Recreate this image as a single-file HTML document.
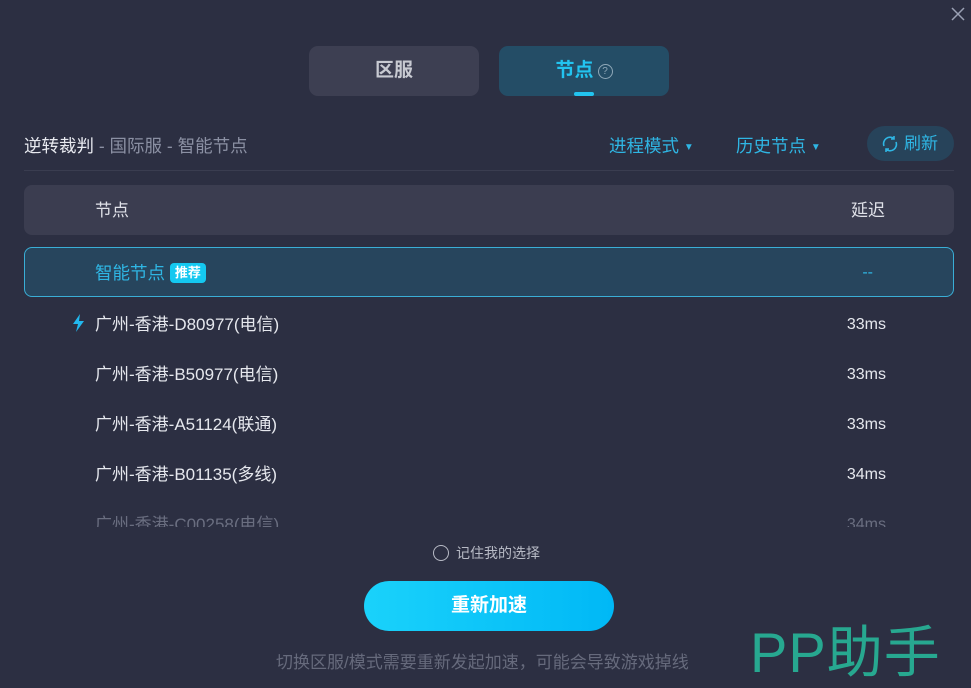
<!DOCTYPE html>
<html><head><meta charset="utf-8"><style>
*{margin:0;padding:0;box-sizing:border-box}
body{width:971px;height:676px;background:#2c2f42;font-family:"Liberation Sans","Noto Sans CJK SC",sans-serif;position:relative;overflow:hidden;color:#e6e8ee}
.a{position:absolute}
.tab{position:absolute;top:46px;width:170px;height:50px;border-radius:9px;font-size:19px;font-weight:bold;text-align:center;line-height:50px}
.row{position:absolute;left:24px;width:930px;height:50px;font-size:17px;line-height:54px}
.row .n{position:absolute;left:71px}
.row .d{position:absolute;right:68px;font-size:16px}
</style></head><body>
<svg class="a" style="left:951px;top:7px" width="14" height="14"><path d="M1 1L13 13M13 1L1 13" stroke="#9aa0b4" stroke-width="1.5"/></svg>
<div class="tab" style="left:309px;background:#3d3f52;color:#c8cad2">区服</div>
<div class="tab" style="left:499px;background:#244d66;color:#22c4f0">节点<span style="display:inline-block;width:15px;height:15px;border:1.3px solid #8fa8b8;border-radius:50%;font-size:10px;line-height:13px;color:#8fa8b8;font-weight:normal;vertical-align:2px;margin-left:4px">?</span></div>
<div class="a" style="left:574px;top:92px;width:20px;height:4px;border-radius:2px;background:#22c4f0"></div>
<div class="a" style="left:24px;top:133px;font-size:17.5px;color:#8b90a3"><span style="color:#e8eaf0">逆转裁判</span> - 国际服 - 智能节点</div>
<div class="a" style="left:609px;top:133px;font-size:17.5px;color:#2fb6e4">进程模式 <span style="font-size:10px;vertical-align:2px">▼</span></div>
<div class="a" style="left:736px;top:133px;font-size:17.5px;color:#2fb6e4">历史节点 <span style="font-size:10px;vertical-align:2px">▼</span></div>
<div class="a" style="left:867px;top:126px;width:87px;height:35px;border-radius:18px;background:#27435a;color:#2fb6e4;font-size:17px;line-height:36px;padding-left:37px">刷新</div>
<svg class="a" style="left:880px;top:134px" width="20" height="20" fill="none" stroke="#2fb6e4" stroke-width="1.6"><path d="M4 12A6.5 6.5 0 0 1 14 4.5M16 8A6.5 6.5 0 0 1 6 15.5"/><path d="M14 2v3h-3M6 18v-3h3"/></svg>
<div class="a" style="left:24px;top:170px;width:930px;height:1px;background:#3a3d50"></div>
<div class="row" style="top:185px;background:#3b3d50;border-radius:8px;color:#dfe1e8;line-height:52px"><span class="n">节点</span><span class="d" style="right:69px;font-size:17px">延迟</span></div>
<div class="row" style="top:247px;height:50px;background:#27455d;border:1px solid #3aaed6;border-radius:8px;color:#2fb6e4;line-height:50px"><span class="n" style="left:70px;font-size:17.5px">智能节点 <span style="display:inline-block;background:#14c8f0;color:#fff;font-size:13px;font-weight:bold;line-height:20px;padding:0 5px;border-radius:4px;vertical-align:2px">推荐</span></span><span class="d" style="right:80px">--</span></div>
<svg class="a" style="left:72px;top:314px" width="14" height="18"><path d="M8 0L1 10h5l-2 8 8-11H7z" fill="#22b8ee"/></svg>
<div class="row" style="top:298px"><span class="n">广州-香港-D80977(电信)</span><span class="d">33ms</span></div>
<div class="row" style="top:348px"><span class="n">广州-香港-B50977(电信)</span><span class="d">33ms</span></div>
<div class="row" style="top:398px"><span class="n">广州-香港-A51124(联通)</span><span class="d">33ms</span></div>
<div class="row" style="top:448px"><span class="n">广州-香港-B01135(多线)</span><span class="d">34ms</span></div>
<div class="a" style="left:24px;top:498px;width:930px;height:29px;overflow:hidden"><div class="row" style="left:0;top:0;color:#6a6e80"><span class="n">广州-香港-C00258(电信)</span><span class="d">34ms</span></div></div>
<div class="a" style="left:433px;top:545px;width:16px;height:16px;border:1.3px solid #b8bbc6;border-radius:50%"></div>
<div class="a" style="left:456px;top:543px;font-size:14px;color:#b8bbc6">记住我的选择</div>
<div class="a" style="left:364px;top:581px;width:250px;height:50px;border-radius:25px;background:linear-gradient(90deg,#1ad2fb,#00b8f6);color:#fff;font-size:19px;font-weight:bold;text-align:center;line-height:50px">重新加速</div>
<div class="a" style="left:276px;top:648px;font-size:17px;color:#666a7c">切换区服/模式需要重新发起加速，可能会导致游戏掉线</div>
<div class="a" style="left:750px;top:618px;font-size:56px;color:#27a890;letter-spacing:1px;line-height:70px">PP助手</div>
</body></html>
